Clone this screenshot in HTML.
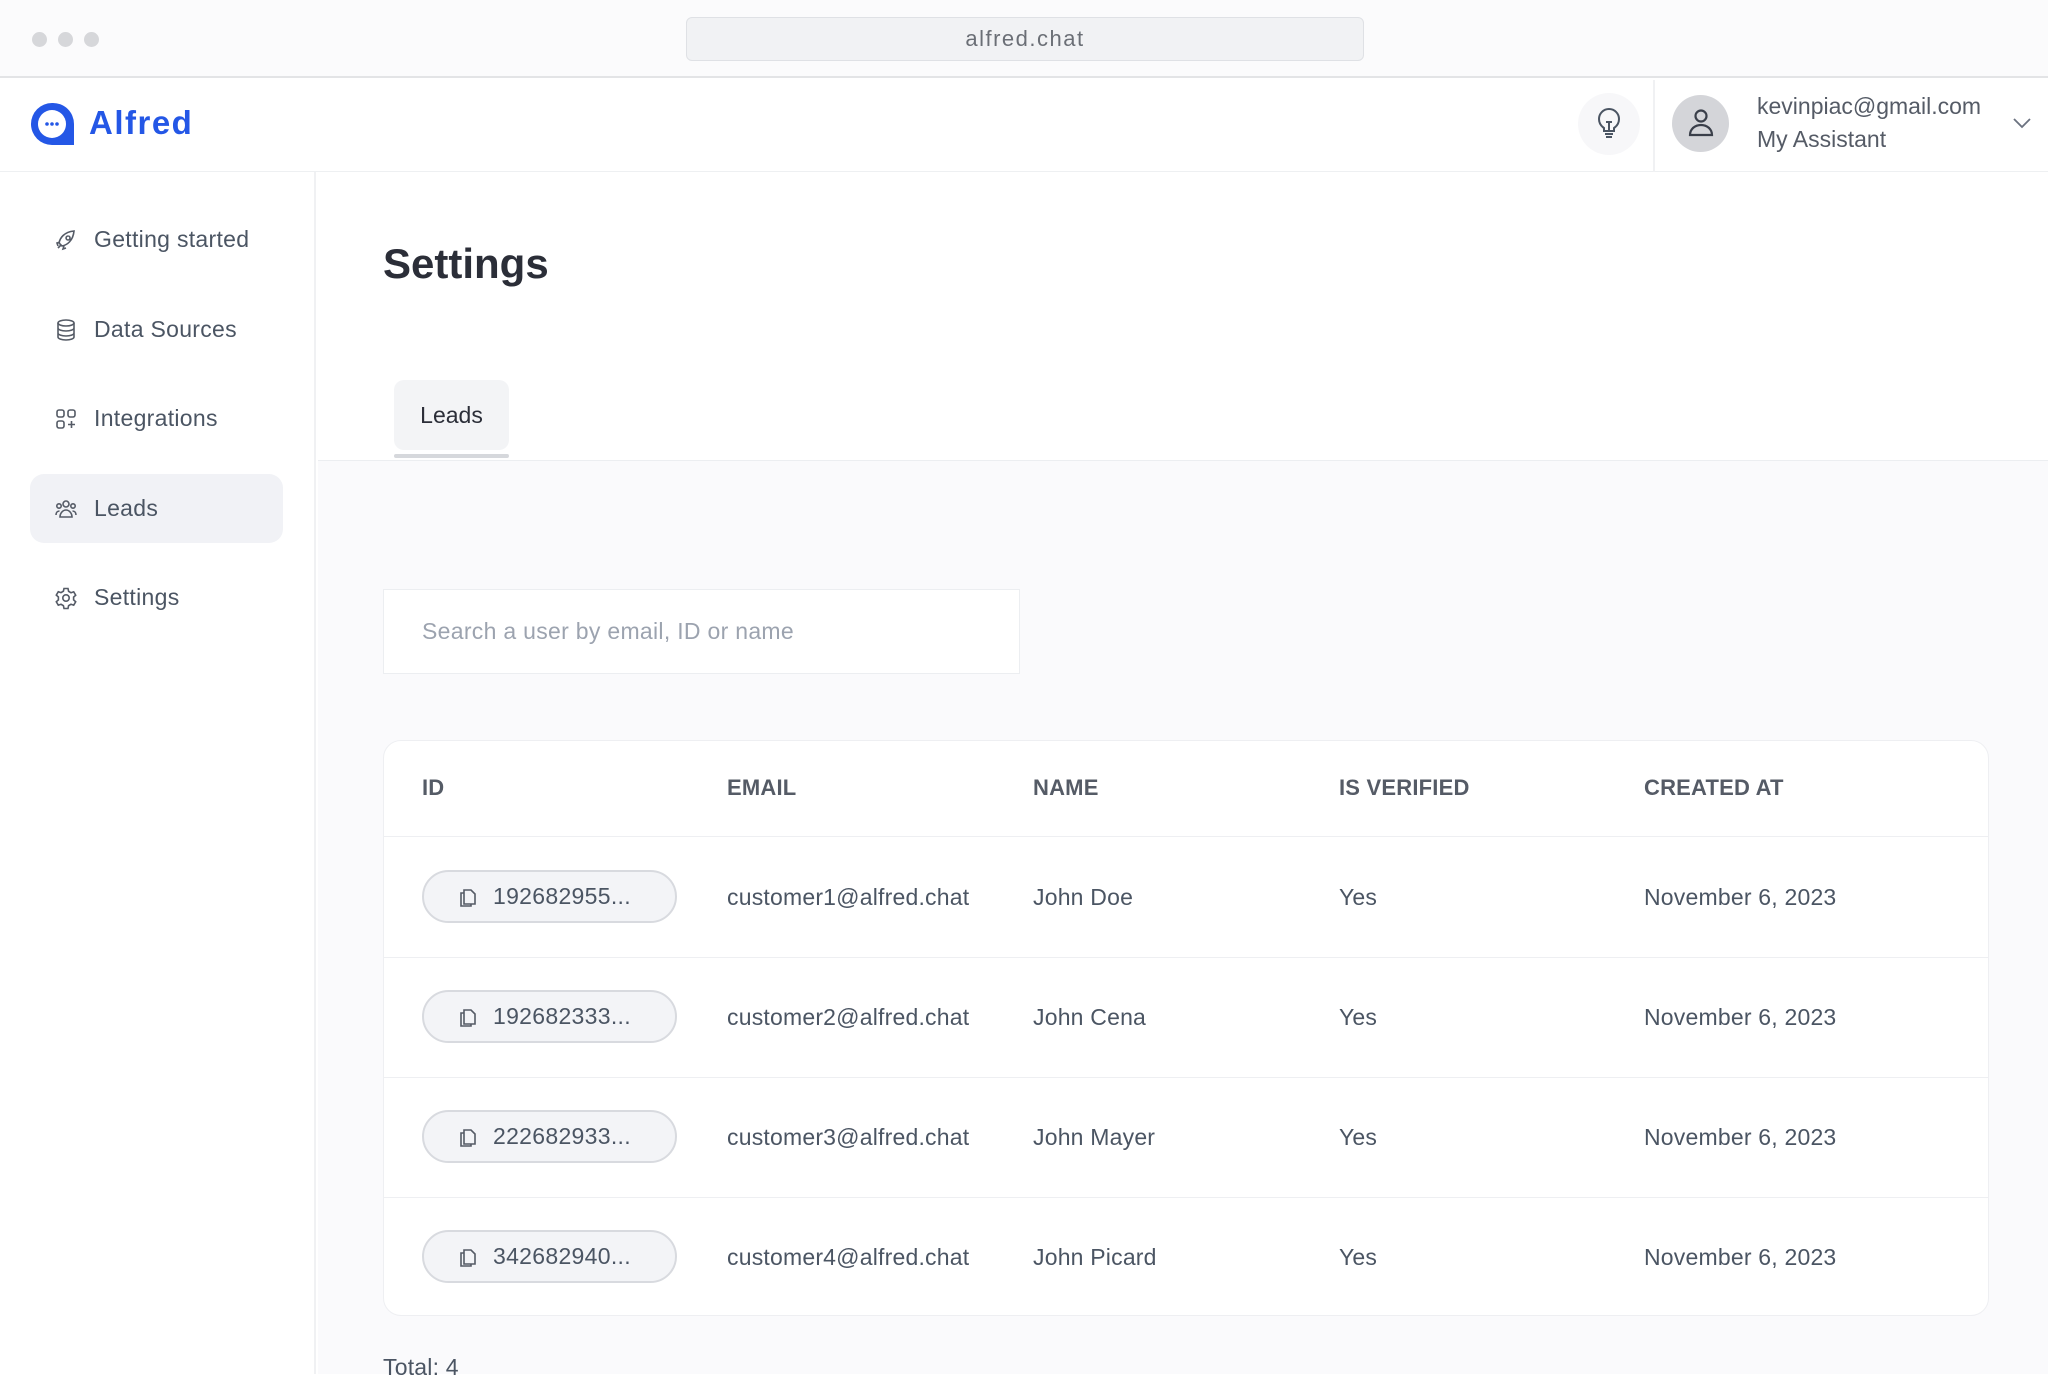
<!DOCTYPE html>
<html><head><meta charset="utf-8"><style>
*{box-sizing:border-box;margin:0;padding:0}
body{width:2048px;height:1374px;overflow:hidden;background:#fff;font-family:"Liberation Sans",sans-serif;color:#4b5563;position:relative}
.abs{position:absolute}
.top{left:0;top:0;width:2048px;height:78px;background:#fbfbfc;border-bottom:2px solid #e3e4e6}
.dot{width:15px;height:15px;border-radius:50%;background:#d6d7da;top:32px}
.url{left:686px;top:17px;width:678px;height:44px;background:#f1f2f4;border:1px solid #dfe1e5;border-radius:6px;text-align:center;line-height:42px;font-size:22px;color:#6b6f76;letter-spacing:1.5px}
.hdr{left:0;top:78px;width:2048px;height:94px;border-bottom:1px solid #eef0f2}
.side{left:0;top:172px;width:316px;height:1202px;border-right:2px solid #f0f1f3}
.item{left:30px;width:253px;height:69px;border-radius:14px;font-size:23px;color:#4b5563;line-height:69px;padding-left:64px;letter-spacing:0.3px}
.item svg{position:absolute;left:24px;top:23px}
.main{left:318px;top:460px;width:1730px;height:914px;background:#fafafc;border-top:1px solid #eceef1}
.col{position:absolute;font-size:23px;color:#4b5563;letter-spacing:0.2px}
.pill{position:absolute;left:422px;width:255px;height:53px;border:2px solid #d8dadf;background:#f3f4f7;border-radius:27px;font-size:23px;line-height:49px;padding-left:69px;color:#4b5563;letter-spacing:0.3px}
.pill svg{position:absolute;left:34px;top:14px}
</style></head><body>
<div class="abs top"></div>
<div class="abs dot" style="left:32px"></div><div class="abs dot" style="left:58px"></div><div class="abs dot" style="left:84px"></div>
<div class="abs url">alfred.chat</div>
<div class="abs hdr"></div>
<svg class="abs" style="left:28px;top:100px" width="50" height="50" viewBox="0 0 50 50"><path d="M24 3a21 21 0 1 0 0 42h22V24A21 21 0 0 0 24 3z" fill="#2457e6"/><circle cx="24" cy="24" r="14" fill="#fff"/><circle cx="19" cy="24" r="1.8" fill="#2457e6"/><circle cx="24" cy="24" r="1.8" fill="#2457e6"/><circle cx="29" cy="24" r="1.8" fill="#2457e6"/></svg>
<div class="abs" style="left:89px;top:104px;font-size:33px;font-weight:bold;color:#2457e6;letter-spacing:1.5px">Alfred</div>
<div class="abs" style="left:1578px;top:93px;width:62px;height:62px;border-radius:50%;background:#f7f7f9"></div>
<svg class="abs" style="left:1596px;top:108px" width="26" height="32" viewBox="0 0 26 32" fill="none" stroke="#4b5563" stroke-width="2"><path d="M8 20c-3-2-5-5-5-9a10 10 0 0 1 20 0c0 4-2 7-5 9v3H8z"/><path d="M10 14h6M13 14v9M9 26h8M10 29h6"/></svg>
<div class="abs" style="left:1653px;top:80px;width:2px;height:92px;background:#f0f1f3"></div>
<div class="abs" style="left:1672px;top:95px;width:57px;height:57px;border-radius:50%;background:#d4d5d9"></div>
<svg class="abs" style="left:1686px;top:107px" width="30" height="32" viewBox="0 0 30 32" fill="none" stroke="#3a3f4a" stroke-width="2.2"><circle cx="15" cy="9" r="5.5"/><path d="M4 28c0-6 5-10 11-10s11 4 11 10z"/></svg>
<div class="abs" style="left:1757px;top:93px;font-size:23px;color:#555b66">kevinpiac@gmail.com</div>
<div class="abs" style="left:1757px;top:126px;font-size:23px;color:#555b66">My Assistant</div>
<svg class="abs" style="left:2012px;top:116px" width="20" height="14" viewBox="0 0 20 14" fill="none" stroke="#6b7280" stroke-width="1.8"><path d="M2 3l8 8 8-8"/></svg>
<div class="abs side"></div>
<div class="abs item" style="top:205px">Getting started<svg width="24" height="24" viewBox="0 0 24 24" fill="none" stroke="#555b66" stroke-width="1.6"><path d="M5 15c1-5 5-11 15-12-1 10-7 14-12 15zM6 14l-3 1 1 3M10 18l-1 3 3-1M4 20l3-3M14 8a2 2 0 1 0 .1 0"/></svg></div>
<div class="abs item" style="top:295px">Data Sources<svg width="24" height="24" viewBox="0 0 24 24" fill="none" stroke="#555b66" stroke-width="1.6"><ellipse cx="12" cy="5" rx="8" ry="3"/><path d="M4 5v14c0 1.7 3.6 3 8 3s8-1.3 8-3V5M4 10c0 1.7 3.6 3 8 3s8-1.3 8-3M4 15c0 1.7 3.6 3 8 3s8-1.3 8-3"/></svg></div>
<div class="abs item" style="top:384px">Integrations<svg width="24" height="24" viewBox="0 0 24 24" fill="none" stroke="#555b66" stroke-width="1.6"><rect x="3" y="3" width="7" height="7" rx="2"/><rect x="14" y="3" width="7" height="7" rx="2"/><rect x="3" y="14" width="7" height="7" rx="2"/><path d="M17.5 14v7M14 17.5h7"/></svg></div>
<div class="abs item" style="top:474px;background:#f1f2f6">Leads<svg width="24" height="24" viewBox="0 0 24 24" fill="none" stroke="#555b66" stroke-width="1.6"><circle cx="12" cy="7" r="3"/><circle cx="5" cy="9" r="2.2"/><circle cx="19" cy="9" r="2.2"/><path d="M6 20c0-4 3-7 6-7s6 3 6 7zM2 18c0-2.5 1.5-4 3.5-4M22 18c0-2.5-1.5-4-3.5-4"/></svg></div>
<div class="abs item" style="top:563px">Settings<svg width="24" height="24" viewBox="0 0 24 24" fill="none" stroke="#555b66" stroke-width="1.6"><circle cx="12" cy="12" r="3.2"/><path d="M10 2.5h4l.6 2.8 2.4 1.4 2.7-.9 2 3.4-2.1 1.9v2.8l2.1 1.9-2 3.4-2.7-.9-2.4 1.4-.6 2.8h-4l-.6-2.8-2.4-1.4-2.7.9-2-3.4 2.1-1.9V11L2.3 9.1l2-3.4 2.7.9 2.4-1.4z"/></svg></div>
<div class="abs" style="left:383px;top:240px;font-size:42px;font-weight:bold;color:#2b2e38">Settings</div>
<div class="abs main"></div>
<div class="abs" style="left:394px;top:380px;width:115px;height:70px;background:#f3f4f6;border-radius:10px;text-align:center;line-height:70px;font-size:23px;color:#2b2e38">Leads</div>
<div class="abs" style="left:394px;top:454px;width:115px;height:4px;background:#d6d8dc;border-radius:2px"></div>
<div class="abs" style="left:383px;top:589px;width:637px;height:85px;background:#fff;border:1px solid #eceef1;font-size:23px;color:#9ca3af;line-height:83px;padding-left:38px;letter-spacing:0.3px">Search a user by email, ID or name</div>
<div class="abs" style="left:383px;top:740px;width:1606px;height:576px;background:#fff;border:1px solid #eeeff2;border-radius:18px"></div>
<div class="abs" style="left:384px;top:836px;width:1604px;height:1px;background:#eeeff2"></div>
<div class="abs" style="left:384px;top:957px;width:1604px;height:1px;background:#eeeff2"></div>
<div class="abs" style="left:384px;top:1077px;width:1604px;height:1px;background:#eeeff2"></div>
<div class="abs" style="left:384px;top:1197px;width:1604px;height:1px;background:#eeeff2"></div>
<div class="col" style="left:422px;top:775px;font-size:22px;font-weight:bold;color:#555b66">ID</div>
<div class="col" style="left:727px;top:775px;font-size:22px;font-weight:bold;color:#555b66">EMAIL</div>
<div class="col" style="left:1033px;top:775px;font-size:22px;font-weight:bold;color:#555b66">NAME</div>
<div class="col" style="left:1339px;top:775px;font-size:22px;font-weight:bold;color:#555b66">IS VERIFIED</div>
<div class="col" style="left:1644px;top:775px;font-size:22px;font-weight:bold;color:#555b66">CREATED AT</div>

<div class="pill" style="top:870px"><svg width="20" height="22" viewBox="0 0 20 22" fill="none" stroke="#555b66" stroke-width="1.6"><path d="M6 4h7l4 4v10H6z M6 7H3v13h10v-2"/></svg>192682955...</div>
<div class="col" style="left:727px;top:884px">customer1@alfred.chat</div><div class="col" style="left:1033px;top:884px">John Doe</div><div class="col" style="left:1339px;top:884px">Yes</div><div class="col" style="left:1644px;top:884px">November 6, 2023</div>

<div class="pill" style="top:990px"><svg width="20" height="22" viewBox="0 0 20 22" fill="none" stroke="#555b66" stroke-width="1.6"><path d="M6 4h7l4 4v10H6z M6 7H3v13h10v-2"/></svg>192682333...</div>
<div class="col" style="left:727px;top:1004px">customer2@alfred.chat</div><div class="col" style="left:1033px;top:1004px">John Cena</div><div class="col" style="left:1339px;top:1004px">Yes</div><div class="col" style="left:1644px;top:1004px">November 6, 2023</div>

<div class="pill" style="top:1110px"><svg width="20" height="22" viewBox="0 0 20 22" fill="none" stroke="#555b66" stroke-width="1.6"><path d="M6 4h7l4 4v10H6z M6 7H3v13h10v-2"/></svg>222682933...</div>
<div class="col" style="left:727px;top:1124px">customer3@alfred.chat</div><div class="col" style="left:1033px;top:1124px">John Mayer</div><div class="col" style="left:1339px;top:1124px">Yes</div><div class="col" style="left:1644px;top:1124px">November 6, 2023</div>

<div class="pill" style="top:1230px"><svg width="20" height="22" viewBox="0 0 20 22" fill="none" stroke="#555b66" stroke-width="1.6"><path d="M6 4h7l4 4v10H6z M6 7H3v13h10v-2"/></svg>342682940...</div>
<div class="col" style="left:727px;top:1244px">customer4@alfred.chat</div><div class="col" style="left:1033px;top:1244px">John Picard</div><div class="col" style="left:1339px;top:1244px">Yes</div><div class="col" style="left:1644px;top:1244px">November 6, 2023</div>

<div class="col" style="left:383px;top:1354px">Total: 4</div>
</body></html>
